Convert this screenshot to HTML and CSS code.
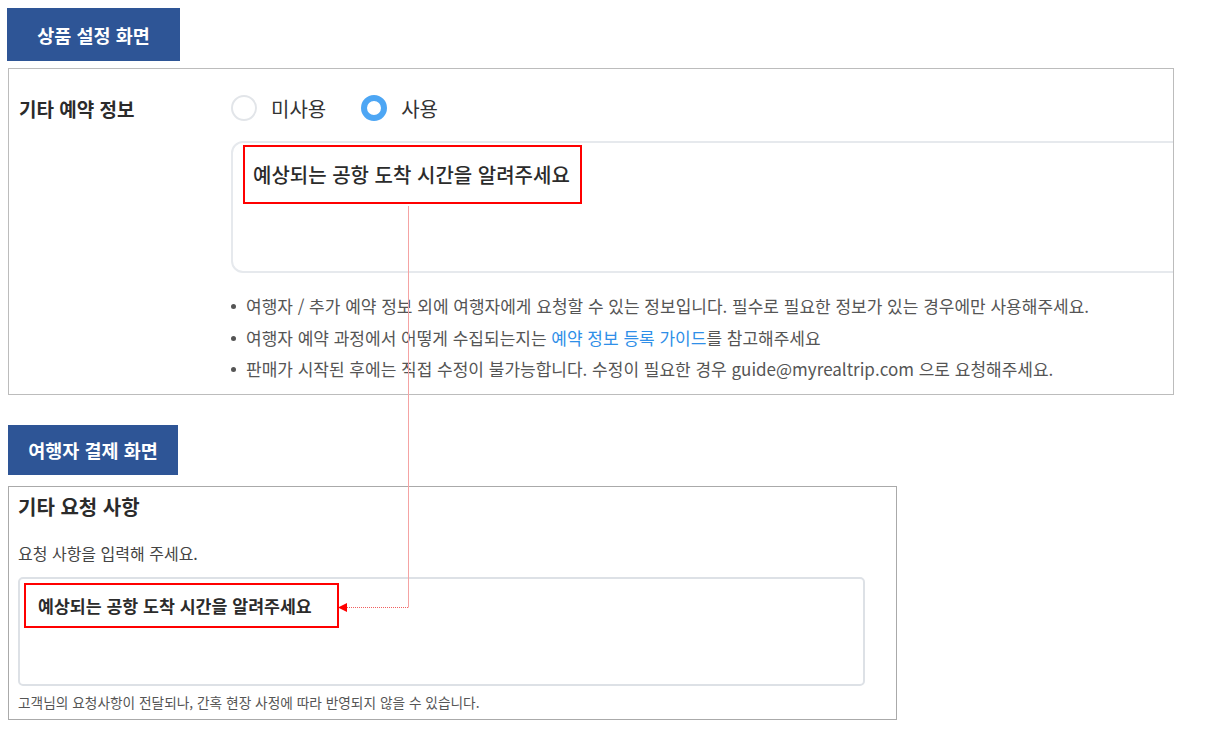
FILE: index.html
```html
<!DOCTYPE html>
<html lang="ko">
<head>
    <meta charset="UTF-8">
    <title>기타 예약 정보</title>
    <link rel="stylesheet" href="styles.css">
</head>
<body>
    <div class="page">
        <div class="tag">상품 설정 화면</div>
        <div class="panel setting">
            <div class="row">
                <div class="label">기타 예약 정보</div>
                <div class="radios">
                    <label class="radio"><span class="dot"></span>미사용</label>
                    <label class="radio on"><span class="dot"></span>사용</label>
                </div>
            </div>
            <div class="field">
                <div class="mark big">예상되는 공항 도착 시간을 알려주세요</div>
            </div>
            <ul class="notes">
                <li>여행자 / 추가 예약 정보 외에 여행자에게 요청할 수 있는 정보입니다. 필수로 필요한 정보가 있는 경우에만 사용해주세요.</li>
                <li>여행자 예약 과정에서 어떻게 수집되는지는 <a href="#">예약 정보 등록 가이드</a>를 참고해주세요</li>
                <li>판매가 시작된 후에는 직접 수정이 불가능합니다. 수정이 필요한 경우 guide@myrealtrip.com 으로 요청해주세요.</li>
            </ul>
        </div>

        <div class="tag second">여행자 결제 화면</div>
        <div class="panel checkout">
            <h3>기타 요청 사항</h3>
            <p class="hint">요청 사항을 입력해 주세요.</p>
            <div class="field small">
                <div class="mark">예상되는 공항 도착 시간을 알려주세요</div>
            </div>
            <p class="foot">고객님의 요청사항이 전달되나, 간혹 현장 사정에 따라 반영되지 않을 수 있습니다.</p>
        </div>
    </div>

    <!-- connector between the two red boxes -->
    <svg class="link" width="1227" height="729">
        <line x1="408.5" y1="206" x2="408.5" y2="607.5" stroke="#f5a3a3" stroke-width="1"/>
        <line x1="408" y1="607.5" x2="346" y2="607.5" stroke="#f06060" stroke-width="1" stroke-dasharray="1 1"/>
        <polygon points="338,607.5 347,603 347,612" fill="#ff0000"/>
    </svg>
</body>
</html>
```

FILE: styles.css
```css
body {
    margin: 0;
    background: #fff;
    font-family: "Noto Sans CJK KR", "Noto Sans", sans-serif;
    color: #333;
}
.page {
    padding: 8px 0 0 8px;
}
.tag {
    width: 173px;
    height: 53px;
    margin-left: -1px;
    background: #2e5596;
    color: #fff;
    font-size: 18.5px;
    font-weight: 700;
    display: flex;
    align-items: center;
    justify-content: center;
}
.tag.second {
    width: 170px;
    height: 50px;
    margin-top: 30px;
    margin-left: 0;
}
.panel {
    border: 1px solid #bcbcbc;
    background: #fff;
    overflow: hidden;
}
.setting {
    width: 1154px;
    margin-top: 7px;
    padding: 26px 0 9px 10px;
}
.row {
    display: flex;
    align-items: center;
    height: 26px;
}
.label {
    width: 212px;
    font-size: 19px;
    font-weight: 700;
    color: #2b2b2b;
}
.radios {
    display: flex;
    gap: 35px;
}
.radio {
    display: flex;
    align-items: center;
    gap: 14px;
    font-size: 20px;
    color: #333;
}
.dot {
    width: 22px;
    height: 22px;
    border: 2px solid #e2e5e9;
    border-radius: 50%;
    background: #fff;
}
.radio.on .dot {
    width: 14px;
    height: 14px;
    border: 6px solid #4da6f4;
}
.field {
    margin: 20px 0 0 212px;
    width: 1000px;
    height: 126px;
    border: 2px solid #e6e9ed;
    border-radius: 12px;
    padding: 2px 0 0 10px;
}
.mark {
    display: inline-block;
    border: 2px solid #f00;
    box-sizing: border-box;
    width: 339px;
    height: 59px;
    padding-left: 8px;
    line-height: 55px;
    font-size: 20px;
    font-weight: 500;
    color: #2b2b2b;
    white-space: nowrap;
}
.notes {
    list-style: none;
    margin: 17px 0 0 212px;
    padding: 0;
}
.notes li {
    position: relative;
    padding-left: 15px;
    font-size: 17px;
    line-height: 31.5px;
    color: #555;
    white-space: nowrap;
}
.notes li::before {
    content: "";
    position: absolute;
    left: 0;
    top: 14px;
    width: 5px;
    height: 5px;
    border-radius: 50%;
    background: #555;
}
.notes a {
    color: #2f8fe8;
    text-decoration: none;
}
.checkout {
    width: 878px;
    margin-top: 11px;
    border-color: #aaa;
    padding: 7px 0 7px 9px;
}
.checkout h3 {
    margin: 0;
    font-size: 20px;
    line-height: 26px;
    font-weight: 700;
    color: #2b2b2b;
}
.hint {
    margin: 23px 0 0;
    font-size: 16px;
    line-height: 20px;
    color: #444;
}
.field.small {
    margin: 14px 0 0 0;
    width: 839px;
    height: 101px;
    border-color: #dde1e6;
    border-radius: 5px;
    padding: 4px 0 0 4px;
}
.field.small .mark {
    width: 315px;
    height: 45px;
    line-height: 41px;
    padding-left: 12px;
    font-size: 17.3px;
    font-weight: 700;
}
.foot {
    margin: 6px 0 0;
    font-size: 13.7px;
    line-height: 20px;
    color: #555;
}
.link {
    position: absolute;
    left: 0;
    top: 0;
    pointer-events: none;
}
```
